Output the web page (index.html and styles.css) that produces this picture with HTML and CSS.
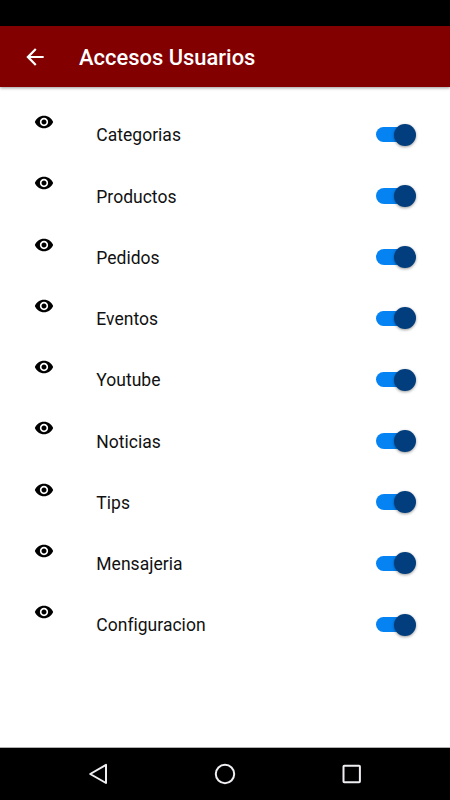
FILE: index.html
```html
<!DOCTYPE html>
<html lang="es">
<head>
<meta charset="utf-8">
<title>Accesos Usuarios</title>
<link rel="stylesheet" href="styles.css">
</head>
<body>
<svg class="defs" aria-hidden="true">
  <symbol id="eye" viewBox="0 0 24 24"><path d="M12 4.5C7 4.5 2.73 7.61 1 12c1.73 4.39 6 7.5 11 7.5s9.27-3.11 11-7.5c-1.73-4.39-6-7.5-11-7.5zM12 17c-2.76 0-5-2.24-5-5s2.24-5 5-5 5 2.24 5 5-2.24 5-5 5zm0-8c-1.66 0-3 1.34-3 3s1.34 3 3 3 3-1.34 3-3-1.34-3-3-3z"/></symbol>
</svg>
<div class="status-bar"></div>
<header class="app-bar">
  <svg class="back" viewBox="0 0 24 24"><path d="M20 11H7.83l5.59-5.59L12 4l-8 8 8 8 1.41-1.41L7.83 13H20v-2z"/></svg>
  <h1 class="title">Accesos Usuarios</h1>
</header>
<main class="list">
  <div class="row"><svg class="eye"><use href="#eye"/></svg><span class="label">Categorias</span><span class="switch"><span class="thumb"></span></span></div>
  <div class="row"><svg class="eye"><use href="#eye"/></svg><span class="label">Productos</span><span class="switch"><span class="thumb"></span></span></div>
  <div class="row"><svg class="eye"><use href="#eye"/></svg><span class="label">Pedidos</span><span class="switch"><span class="thumb"></span></span></div>
  <div class="row"><svg class="eye"><use href="#eye"/></svg><span class="label">Eventos</span><span class="switch"><span class="thumb"></span></span></div>
  <div class="row"><svg class="eye"><use href="#eye"/></svg><span class="label">Youtube</span><span class="switch"><span class="thumb"></span></span></div>
  <div class="row"><svg class="eye"><use href="#eye"/></svg><span class="label">Noticias</span><span class="switch"><span class="thumb"></span></span></div>
  <div class="row"><svg class="eye"><use href="#eye"/></svg><span class="label">Tips</span><span class="switch"><span class="thumb"></span></span></div>
  <div class="row"><svg class="eye"><use href="#eye"/></svg><span class="label">Mensajeria</span><span class="switch"><span class="thumb"></span></span></div>
  <div class="row"><svg class="eye"><use href="#eye"/></svg><span class="label">Configuracion</span><span class="switch"><span class="thumb"></span></span></div>
</main>
<nav class="nav-bar">
  <svg class="nav-icon" viewBox="0 0 24 24"><path d="M19 2.8v18.2L3.2 12z"/></svg>
  <svg class="nav-icon" viewBox="0 0 24 24"><circle cx="12" cy="12" r="9.2"/></svg>
  <svg class="nav-icon" viewBox="0 0 24 24"><rect x="4.5" y="3.8" width="16.4" height="16.4" rx=".8"/></svg>
</nav>
</body>
</html>
```

FILE: styles.css
```css
* {
  box-sizing: border-box;
}

body {
  margin: 0;
  height: 800px;
  display: flex;
  flex-direction: column;
  overflow: hidden;
  background: #fff;
  color: #111;
  font-family: Roboto, sans-serif;
}

.defs {
  display: none;
}

.status-bar {
  height: 26px;
  background: #000;
}

.app-bar {
  height: 61px;
  display: flex;
  align-items: center;
  padding-left: 22px;
  background: #830000;
  color: #fff;
  box-shadow: 0 1px 3px rgba(0, 0, 0, .4);
}

.back {
  width: 26px;
  height: 26px;
  fill: currentColor;
}

.title {
  margin: 0 0 0 31px;
  padding-top: 2px;
  font-size: 21.9px;
  line-height: 26px;
  font-weight: 500;
  letter-spacing: .02px;
}

.list {
  flex: 1;
  padding: 17px 34px 0;
}

.row {
  height: 61.25px;
  display: flex;
  align-items: center;
}

.eye {
  width: 20px;
  height: 20px;
  margin-bottom: 25px;
  fill: #000;
}

.label {
  flex: 1;
  margin-left: 42.3px;
  padding-top: 1.5px;
  font-size: 17.5px;
  line-height: 22px;
  letter-spacing: .02px;
}

.switch {
  width: 36px;
  height: 15.3px;
  margin-right: 4px;
  display: flex;
  align-items: center;
  justify-content: flex-end;
  border-radius: 8px;
  background: #0583f2;
}

.thumb {
  flex: none;
  width: 21.8px;
  height: 21.8px;
  margin-right: -3.6px;
  border-radius: 50%;
  background: #023e7d;
  box-shadow: 0 1px 3px rgba(0, 0, 0, .4);
}

.nav-bar {
  height: 53px;
  padding: 0 36px;
  display: grid;
  grid-template-columns: repeat(3, 1fr);
  align-items: center;
  justify-items: center;
  background: #000;
  border-top: 1px solid #b0b0b0;
}

.nav-icon {
  width: 24px;
  height: 24px;
  fill: none;
  stroke: #f0eef2;
  stroke-width: 2;
  stroke-linejoin: round;
}
```
